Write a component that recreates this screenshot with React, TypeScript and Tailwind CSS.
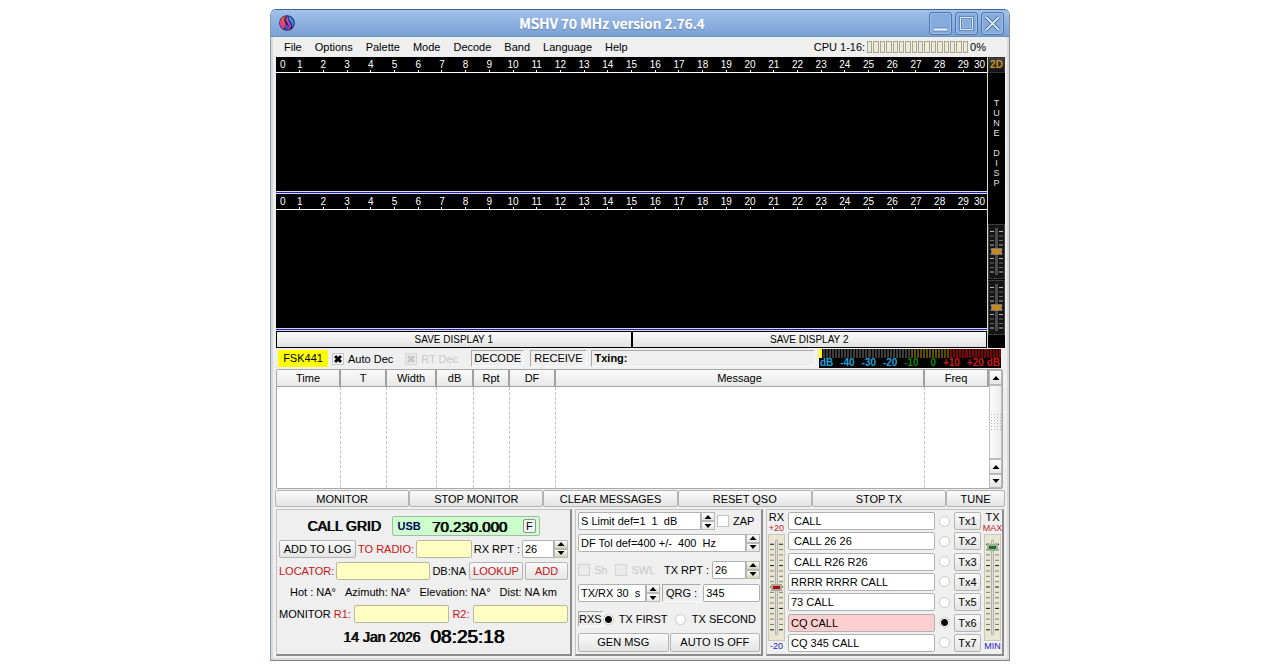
import { useState, type ReactNode } from "react";
import { clsx } from "clsx";

const MENU = ["File", "Options", "Palette", "Mode", "Decode", "Band", "Language", "Help"];
const SECONDS = Array.from({ length: 29 }, (_, i) => i + 1);

const COLUMNS = [
  { label: "Time", width: "w-[64px]" },
  { label: "T", width: "w-[46px]" },
  { label: "Width", width: "w-[50px]" },
  { label: "dB", width: "w-[37px]" },
  { label: "Rpt", width: "w-[36px]" },
  { label: "DF", width: "w-[46px]" },
  { label: "Message", width: "" },
  { label: "Freq", width: "w-[64px]" },
];

const ACTIONS = ["MONITOR", "STOP MONITOR", "CLEAR MESSAGES", "RESET QSO", "STOP TX"];

const MESSAGES = [" CALL", " CALL 26 26", " CALL R26 R26", "RRRR RRRR CALL", "73 CALL", "CQ CALL", "CQ 345 CALL"];

const DB_MARKS = [
  { label: "dB", color: "text-[#1fa3dc]" },
  { label: "-40", color: "text-[#1fa3dc]" },
  { label: "-30", color: "text-[#1fa3dc]" },
  { label: "-20", color: "text-[#1fa3dc]" },
  { label: "-10", color: "text-[#12851a]" },
  { label: "0", color: "pl-[5px] text-[#12851a]" },
  { label: "+10", color: "text-[#d01818]" },
  { label: "+20", color: "-mr-1 text-[#d01818]" },
  { label: "dB", color: "text-[#d01818]" },
];

const buttonClass =
  "rounded-[2px] border border-[#b4b4b4] bg-linear-to-b from-[#fafafa] to-[#e4e4e4] text-center whitespace-nowrap active:from-[#dcdcdc]";
const fieldClass = "h-[18px] min-w-0 rounded-[2px] border border-[#b0b0b0] px-[2px] outline-none";
const yellowClass = "h-[18px] min-w-0 flex-1 rounded-[2px] border border-[#b8b8a0] bg-[#ffffc4] px-1 outline-none";
const panelClass = "border border-r-2 border-b-2 border-[#c4c4c4] border-r-[#8c8c8c] border-b-[#8c8c8c]";
const sunkenClass = "border border-t-[#a8a8a8] border-l-[#a8a8a8] border-r-[#fafafa] border-b-[#fafafa] whitespace-nowrap";
const heavyClass = "[text-shadow:1px_0_0_currentColor]";

function AppIcon() {
  return (
    <svg viewBox="0 0 16 16" className="h-4 w-4">
      <circle cx="8" cy="8" r="7.8" fill="#23224e" />
      <path d="M7.6 1A7 7 0 0 0 3.6 13.4C6.4 13 7.4 10.6 6 8 4.6 5.4 5 2.6 7.6 1Z" fill="#f0603c" />
      <path d="M3.2 3.4A7 7 0 0 0 1.2 9.6C2 12 3 13 4.6 14 6.2 12.4 6 10.6 4.6 8.6 3.4 6.8 2.8 5.4 3.2 3.4Z" fill="#e0389c" />
      <path d="M9 1C6.4 2.4 6 4.8 8 7.2 10.2 9.8 10.4 12.6 8 15 11.4 14.4 12.6 12 11.6 9.4 10.6 6.6 8 4.4 9 1Z" fill="#c040c8" />
      <path d="M9.8 1.2C8.8 3.6 10.4 5.4 12 7.4 13.2 9 13.4 10.8 12.8 12.8A7 7 0 0 0 9.8 1.2Z" fill="#3c88e0" />
      <path d="M6.6 9C7.8 11 7.2 13.4 5.2 14.4 7 15.2 8.2 14.6 9 13 9.6 11.4 8.4 9.6 6.6 9Z" fill="#4458d8" />
    </svg>
  );
}

function TitleButton({ label, children }: { label: string; children: ReactNode }) {
  return (
    <button aria-label={label} className="flex h-[23px] w-[23px] items-center justify-center rounded-[3px] border border-[#4c76ae] bg-[#86acdc] shadow-[inset_0_0_0_1px_#9dbde6]">
      <svg viewBox="0 0 17 17" className="h-[17px] w-[17px]" fill="none">
        {children}
      </svg>
    </button>
  );
}

function TitleBar() {
  return (
    <header className="flex h-[27px] items-center gap-[3px] border-b border-[#6a90c4] bg-linear-to-b from-[#a3c1ea] via-[#8cb0e0] to-[#7ba2d4] pr-[5px] pl-2">
      <AppIcon />
      <h1 className="min-w-0 flex-1 truncate text-center font-['Noto_Sans_CJK_SC','Noto_Sans',sans-serif] text-[14px] leading-[20px] font-medium text-white [text-shadow:0_0_1px_#fff,0_1px_1px_#4a6f9f]">
        MSHV 70 MHz version 2.76.4
      </h1>
      <TitleButton label="Minimize">
        <path d="M1 14.5h15" stroke="#6088c0" strokeWidth="4" />
        <path d="M1.5 14.5h14" stroke="#f4f8ff" strokeWidth="2" />
      </TitleButton>
      <TitleButton label="Maximize">
        <path d="M2.5 2.5h12v12h-12z" stroke="#6088c0" strokeWidth="3" />
        <path d="M2.5 2.5h12v12h-12z" stroke="#e2ecfa" />
        <path d="M4.5 4.5h8v8h-8z" stroke="#9cbce4" />
      </TitleButton>
      <TitleButton label="Close">
        <path d="M2 2l13 13M15 2L2 15" stroke="#4a70a8" strokeWidth="3.5" />
        <path d="M2 2l13 13M15 2L2 15" stroke="#f4f8ff" strokeWidth="1.7" />
      </TitleButton>
    </header>
  );
}

function MenuBar() {
  return (
    <div className="flex h-[20px] items-center pr-[19px] pl-[9px]">
      <nav className="flex flex-1 gap-[13px]">
        {MENU.map((item) => (
          <button key={item}>{item}</button>
        ))}
      </nav>
      <span>CPU 1-16:</span>
      <div className="mx-px flex h-[12px] w-[103px] gap-px px-px">
        {Array.from({ length: 16 }, (_, i) => (
          <span key={i} className="flex-1 border border-[#a6a690] bg-[#ecebd8]" />
        ))}
      </div>
      <span>0%</span>
    </div>
  );
}

function Scope() {
  return (
    <div className="bg-black">
      <div className="flex h-[16px] border-b border-white text-[10px] text-white">
        <span className="min-w-0 flex-1 leading-[16px]">
          <span className="ml-1">0</span>
        </span>
        {SECONDS.map((s) => (
          <span key={s} className="flex min-w-0 flex-2 flex-col items-center">
            <span className="h-[13px] leading-[16px]">{s}</span>
            <span className="h-[2px] w-px bg-white" />
          </span>
        ))}
        <span className="flex min-w-0 flex-1 justify-end leading-[16px]">
          <span className="mr-[2px]">30</span>
        </span>
      </div>
      <div className="h-[118px]" />
      <div className="h-[3px] border-y border-[#d8d8f0] bg-[#2020b0]" />
    </div>
  );
}

function DarkSlider({ label, value }: { label: string; value: number }) {
  return (
    <div className="relative h-[55px] border border-[#3c3c3c] bg-[#141414]">
      <svg viewBox="0 0 15 53" className="h-full w-full" preserveAspectRatio="none">
        {Array.from({ length: 10 }, (_, i) => (
          <path key={i} d={`M1 ${6.5 + i * 4.5}h4M10 ${6.5 + i * 4.5}h4`} stroke={i % 3 ? "#6a6a6a" : "#b4b4b4"} />
        ))}
        <path d="M7.5 3v47" stroke="#4c4c4c" strokeWidth="3" />
      </svg>
      <input
        type="range"
        aria-label={label}
        defaultValue={value}
        className="absolute inset-0 h-full w-full appearance-none bg-transparent [direction:rtl] [writing-mode:vertical-lr] [&::-webkit-slider-thumb]:h-[7px] [&::-webkit-slider-thumb]:w-[11px] [&::-webkit-slider-thumb]:appearance-none [&::-webkit-slider-thumb]:border [&::-webkit-slider-thumb]:border-[#777] [&::-webkit-slider-thumb]:bg-[#c68a1c]"
      />
    </div>
  );
}

const saveClass = "flex-1 border border-black bg-linear-to-b from-[#fafafa] to-[#e2e2e2] text-[10px]";

function Display() {
  return (
    <section className="ml-px flex bg-black">
      <div className="min-w-0 flex-1 border-r border-[#d8d8d8]">
        <Scope />
        <Scope />
        <div className="flex h-[17px] bg-white">
          <button className={saveClass}>SAVE DISPLAY 1</button>
          <button className={saveClass}>SAVE DISPLAY 2</button>
        </div>
      </div>
      <div className="flex w-[17px] flex-col gap-px pb-[13px]">
        <button className="h-[16px] border border-[#333] bg-linear-to-b from-[#444] to-[#111] text-[10px] font-bold text-[#c8922c]">2D</button>
        <button className="flex flex-1 flex-col items-center pt-[24px] text-[9px] leading-[10px] text-[#e0e0e0]">
          {[..."TUNE DISP"].map((c, i) => (
            <span key={i} className="h-[10px]">{c}</span>
          ))}
        </button>
        <DarkSlider label="Brightness" value={50} />
        <DarkSlider label="Contrast" value={50} />
      </div>
    </section>
  );
}

function CheckBox({ label, checked = false, disabled = false }: { label: string; checked?: boolean; disabled?: boolean }) {
  return (
    <label className={clsx("flex items-center gap-1", disabled && "text-[#c8c8c8]")}>
      <span className="relative h-[12px] w-[12px]">
        <input
          type="checkbox"
          defaultChecked={checked}
          disabled={disabled}
          className="peer absolute inset-0 appearance-none border border-[#c4c4c4] bg-white disabled:border-[#d4d4d4] disabled:bg-[#eaeaea]"
        />
        <svg viewBox="0 0 12 12" className="pointer-events-none absolute inset-0 hidden h-3 w-3 peer-checked:block">
          <path d="M3 3l6 6M9 3L3 9" stroke="currentColor" strokeWidth="3" />
        </svg>
      </span>
      {label}
    </label>
  );
}

function LevelMeter() {
  return (
    <div className="h-[19px] w-[182px] bg-black">
      <div className="flex h-[9px] gap-px">
        <span className="w-[3px] bg-[#ffff00]" />
        {Array.from({ length: 59 }, (_, i) => (
          <span key={i} className={clsx("flex-1", i < 29 ? "bg-[#3c3c3c]" : i < 42 ? "bg-[#5c4c00]" : "bg-[#780404]")} />
        ))}
      </div>
      <div className="flex h-[10px] items-center justify-between px-px text-[10px] leading-[10px] font-bold">
        {DB_MARKS.map((m, i) => (
          <span key={i} className={m.color}>{m.label}</span>
        ))}
      </div>
    </div>
  );
}

function StatusRow() {
  return (
    <section className="flex h-[21px] items-center pr-[4px] pl-[3px]">
      <span className="mr-[4px] w-[50px] bg-[#ffff00] text-center leading-[17px]">FSK441</span>
      <CheckBox label="Auto Dec" checked />
      <span className="w-[12px]" />
      <CheckBox label="RT Dec" checked disabled />
      <span className={clsx(sunkenClass, "ml-[13px] px-[2px] leading-[15px]")}>DECODE</span>
      <span className={clsx(sunkenClass, "ml-[6px] px-[3px] leading-[15px]")}>RECEIVE</span>
      <span className={clsx(sunkenClass, "mr-[4px] ml-[4px] flex-1 px-[3px] leading-[15px] font-bold")}>Txing:</span>
      <LevelMeter />
    </section>
  );
}

function ArrowButton({ down = false, className }: { down?: boolean; className?: string }) {
  return (
    <button
      aria-label={down ? "Down" : "Up"}
      className={clsx("flex items-center justify-center border border-[#b8b8b8] bg-linear-to-b from-[#fcfcfc]", className)}
    >
      <svg viewBox="0 0 8 4" className="h-1 w-2">
        <path d={down ? "M0.5 0h7L4 4z" : "M0.5 4h7L4 0z"} fill="#000" />
      </svg>
    </button>
  );
}

function DecodeTable() {
  return (
    <section className="mr-[2px] ml-px flex rounded-[2px] border border-[#a8a8a8] bg-white">
      <table className="h-[118px] min-w-0 flex-1 table-fixed border-separate border-spacing-0">
        <thead>
          <tr className="h-[17px]">
            {COLUMNS.map((c) => (
              <th key={c.label} className={clsx("border-r-2 border-b border-r-[#a0a0a0] border-b-[#a0a0a0] bg-linear-to-b from-[#fafafa] to-[#e8e8e8] p-0 leading-[16px] font-normal", c.width)}>
                {c.label}
              </th>
            ))}
          </tr>
        </thead>
        <tbody>
          <tr>
            {COLUMNS.map((c, i) => (
              <td key={c.label} className={clsx("p-0", i < 7 && "border-r border-dashed border-[#c0c0c0]")} />
            ))}
          </tr>
        </tbody>
      </table>
      <div className="flex w-[13px] flex-col">
        <ArrowButton className="h-[15px] to-[#e6e6e6]" />
        <div className="flex flex-1 items-center justify-center border border-[#c0c0c0] bg-linear-to-r from-[#fcfcfc] to-[#ececec]">
          <svg viewBox="0 0 10 18" className="h-[18px] w-[10px]">
            {[0, 1, 2, 3, 4, 5].map((r) => (
              <path key={r} d={`M0 ${r * 3 + 1.5}h10`} stroke="#b4b4b4" strokeDasharray="1 2" />
            ))}
          </svg>
        </div>
        <ArrowButton className="h-[15px] to-[#e6e6e6]" />
        <ArrowButton down className="h-[14px] to-[#e6e6e6]" />
      </div>
    </section>
  );
}

function Spin({ label, value, className, olive = false }: { label: string; value: string; className?: string; olive?: boolean }) {
  const tone = olive ? "to-[#d4d4b4]" : "to-[#e6e6e6]";
  return (
    <span className={clsx("flex h-[18px] min-w-0", className)}>
      <input aria-label={label} defaultValue={value} className="min-w-0 flex-1 rounded-l-[2px] border border-[#b0b0b0] bg-white px-[2px] outline-none" />
      <span className="flex w-[14px] flex-col">
        <ArrowButton className={clsx("flex-1", tone)} />
        <ArrowButton down className={clsx("flex-1", tone)} />
      </span>
    </span>
  );
}

function StationPanel() {
  return (
    <section className={clsx(panelClass, "flex w-[296px] flex-col justify-between px-[2px] pt-[6px] pb-[7px]")}>
      <div className="flex items-center justify-center gap-[11px]">
        <span className={clsx(heavyClass, "text-[14px] leading-[20px]")}>CALL GRID</span>
        <div className="flex h-[20px] items-center gap-[11px] rounded-[2px] border border-[#a8b8a8] bg-[#ccffcc] pr-[3px] pl-[5px]">
          <b className="text-[#00005c]">USB</b>
          <span className={clsx(heavyClass, "text-[15px] leading-[19px]")}>70.230.000</span>
          <button className="ml-[5px] h-[14px] w-[13px] rounded-[2px] border border-[#909090] bg-[#f4f4f4] leading-[12px]">F</button>
        </div>
      </div>
      <div className="flex items-center gap-[2px]">
        <button className={clsx(buttonClass, "h-[18px] w-[77px]")}>ADD TO LOG</button>
        <label htmlFor="to-radio" className="text-[#c81414]">TO RADIO:</label>
        <input id="to-radio" className={yellowClass} />
        <span className="whitespace-nowrap">RX RPT :</span>
        <Spin label="RX report" value="26" olive className="w-[46px]" />
      </div>
      <div className="flex items-center gap-[2px]">
        <label htmlFor="locator" className="text-[#c81414]">LOCATOR:</label>
        <input id="locator" className={yellowClass} />
        <span className="pr-px">DB:NA</span>
        <button className={clsx(buttonClass, "h-[18px] w-[54px] text-[#c81414]")}>LOOKUP</button>
        <button className={clsx(buttonClass, "h-[18px] w-[43px] text-[#c81414]")}>ADD</button>
      </div>
      <div className="flex justify-center gap-[9px] leading-[18px] whitespace-nowrap">
        <span>Hot : NA°</span>
        <span>Azimuth: NA°</span>
        <span>Elevation: NA°</span>
        <span>Dist: NA km</span>
      </div>
      <div className="flex items-center gap-[3px]">
        <span>MONITOR</span>
        <label htmlFor="r1" className="text-[#c81414]">R1:</label>
        <input id="r1" className={yellowClass} />
        <label htmlFor="r2" className="text-[#c81414]">R2:</label>
        <input id="r2" className={yellowClass} />
      </div>
      <div className={clsx(heavyClass, "flex items-center justify-center gap-[10px] leading-[20px]")}>
        <span className="text-[14px]">14 Jan 2026</span>
        <span className="text-[19px]">08:25:18</span>
      </div>
    </section>
  );
}

const radioClass =
  "h-[11px] w-[11px] shrink-0 appearance-none rounded-full border border-[#c8c8c8] bg-white checked:bg-[radial-gradient(circle,#000_0_3px,#fff_4px)]";

function SettingsPanel() {
  return (
    <section className={clsx(panelClass, "flex w-[188px] flex-col justify-between py-[2px] pr-px pl-[2px]")}>
      <div className="flex items-center gap-[2px]">
        <Spin label="S limit" value="S Limit def=1  1  dB" className="w-[137px]" />
        <CheckBox label="ZAP" />
      </div>
      <Spin label="DF tolerance" value="DF Tol def=400 +/-  400  Hz" />
      <div className="flex items-center pt-[5px]">
        <CheckBox label="Sh" disabled />
        <span className="w-[8px]" />
        <CheckBox label="SWL" disabled />
        <span className="ml-auto pr-[3px] whitespace-nowrap">TX RPT :</span>
        <Spin label="TX report" value="26" olive className="w-[48px]" />
      </div>
      <div className="flex items-center gap-[2px] pt-[2px]">
        <Spin label="Period" value="TX/RX 30  s" className="w-[82px]" />
        <label htmlFor="qrg" className={clsx(sunkenClass, "px-[3px] leading-[16px]")}>QRG :</label>
        <input id="qrg" defaultValue="345" className={clsx(fieldClass, "flex-1 bg-white")} />
      </div>
      <div className="flex items-center pt-[5px] whitespace-nowrap">
        <span className={clsx(sunkenClass, "leading-[14px]")}>RXS</span>
        <label className="flex items-center gap-[5px]">
          <input type="radio" name="period" defaultChecked className={radioClass} />
          TX FIRST
        </label>
        <label className="ml-auto flex items-center gap-[6px] pr-[4px]">
          <input type="radio" name="period" className={radioClass} />
          TX SECOND
        </label>
      </div>
      <div className="flex gap-px pt-[2px]">
        <button className={clsx(buttonClass, "h-[19px] flex-1")}>GEN MSG</button>
        <button className={clsx(buttonClass, "h-[19px] flex-1")}>AUTO IS OFF</button>
      </div>
    </section>
  );
}

function GainSlider({ name, top, bottom, value, thumb }: { name: string; top: string; bottom: string; value: number; thumb: string }) {
  return (
    <div className="flex w-[17px] flex-col items-center whitespace-nowrap">
      <span className="leading-[11px]">{name}</span>
      <span className="text-[9px] leading-[11px] text-[#c01c1c]">{top}</span>
      <div className="relative w-full flex-1 border border-[#c8c8b8] bg-[#e9e6d4]">
        <svg viewBox="0 0 15 108" className="absolute inset-0 h-full w-full" preserveAspectRatio="none">
          {Array.from({ length: 17 }, (_, i) => (
            <path key={i} d={`M1 ${9.5 + i * 5.5}h4M10 ${9.5 + i * 5.5}h4`} stroke={i % 4 ? "#7c7c70" : "#111"} />
          ))}
          <path d="M6.5 5.5h2v97h-2z" fill="#dcdcdc" stroke="#b0b0a8" />
        </svg>
        <input
          type="range"
          aria-label={`${name} level`}
          defaultValue={value}
          className={clsx(
            "absolute inset-0 h-full w-full appearance-none bg-transparent [direction:rtl] [writing-mode:vertical-lr] [&::-webkit-slider-thumb]:h-[7px] [&::-webkit-slider-thumb]:w-[11px] [&::-webkit-slider-thumb]:appearance-none [&::-webkit-slider-thumb]:border-2 [&::-webkit-slider-thumb]:border-[#a8a8a0]",
            thumb
          )}
        />
      </div>
      <span className="text-[9px] leading-[11px] text-[#2020c8]">{bottom}</span>
    </div>
  );
}

function MessagePanel() {
  const [current, setCurrent] = useState(5);
  return (
    <section className={clsx(panelClass, "flex min-w-0 flex-1 gap-[3px] py-[2px] pr-px pl-px")}>
      <GainSlider name="RX" top="+20" bottom="-20" value={50} thumb="[&::-webkit-slider-thumb]:bg-[#b00c0c]" />
      <div className="flex min-w-0 flex-1 flex-col justify-between">
        {MESSAGES.map((m, i) => (
          <div key={i} className="flex items-center gap-[4px]">
            <input
              aria-label={`Message ${i + 1}`}
              defaultValue={m}
              className={clsx(fieldClass, "flex-1", i === current ? "bg-[#ffcfcf]" : "bg-white")}
            />
            <input
              type="radio"
              name="tx"
              aria-label={`Select Tx${i + 1}`}
              checked={i === current}
              onChange={() => setCurrent(i)}
              className={radioClass}
            />
            <button className={clsx(buttonClass, "h-[18px] w-[27px]")}>Tx{i + 1}</button>
          </div>
        ))}
      </div>
      <GainSlider name="TX" top="MAX" bottom="MIN" value={91} thumb="[&::-webkit-slider-thumb]:bg-[#0c7c1c]" />
    </section>
  );
}

export default function App() {
  return (
    <main className="min-h-screen bg-white pt-[9px] font-['Liberation_Sans',Arial,sans-serif] text-[11px] leading-[14px] text-black">
      <div className="mx-auto w-full max-w-[740px] overflow-hidden rounded-t-[6px] border border-t-[#3c64a0] border-r-[#8c8c8c] border-b-[#808080] border-l-[#8c9cb0] bg-[#efefef]">
        <TitleBar />
        <div className="border-x-2 border-b-2 border-[#dadada] px-[2px] pb-[2px]">
          <MenuBar />
          <Display />
          <StatusRow />
          <DecodeTable />
          <div className="flex pt-px">
            {ACTIONS.map((a) => (
              <button key={a} className={clsx(buttonClass, "h-[17px] flex-1")}>{a}</button>
            ))}
            <button className={clsx(buttonClass, "h-[17px] w-[59px]")}>TUNE</button>
          </div>
          <div className="mr-px ml-px flex min-h-[149px] gap-[3px] pt-[2px]">
            <StationPanel />
            <SettingsPanel />
            <MessagePanel />
          </div>
        </div>
      </div>
    </main>
  );
}
